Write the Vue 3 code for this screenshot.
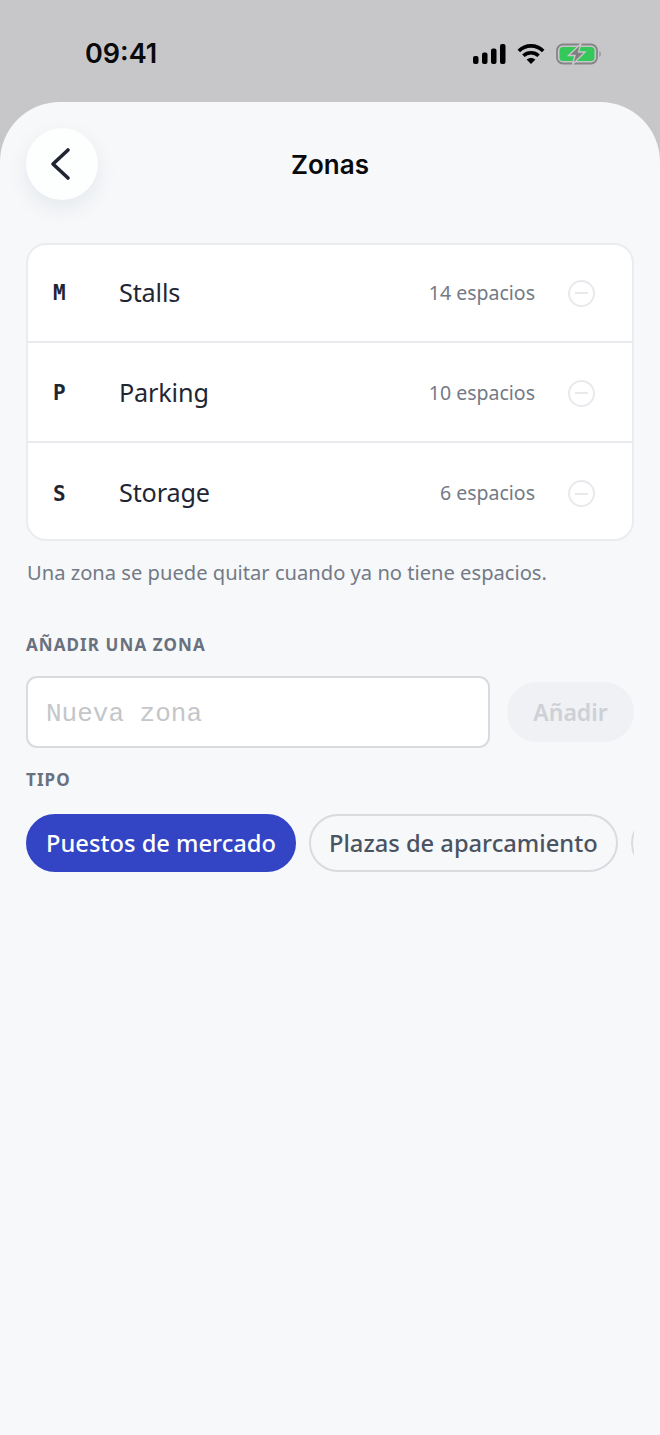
<script setup>
const zones = [
  { code: 'M', name: 'Stalls', count: '14 espacios' },
  { code: 'P', name: 'Parking', count: '10 espacios' },
  { code: 'S', name: 'Storage', count: '6 espacios' },
]
// the third chip is scrolled out of view, only its left edge shows
const types = [
  { label: 'Puestos de mercado', active: true },
  { label: 'Plazas de aparcamiento', active: false },
  { label: '', active: false },
]
</script>

<template>
  <div class="screen">
    <div class="status-bar">
      <span class="clock">09:41</span>
      <div class="status-icons">
        <svg width="33" height="20" viewBox="0 0 33 20" fill="#000">
          <rect x="0" y="12" width="5.5" height="8" rx="2" />
          <rect x="9" y="8.5" width="5.5" height="11.5" rx="2" />
          <rect x="18" y="4.5" width="5.5" height="15.5" rx="2" />
          <rect x="27" y="0" width="5.5" height="20" rx="2" />
        </svg>
        <svg class="wifi" width="28" height="22" viewBox="0 0 28 22" fill="none" stroke="#000" stroke-width="3.6">
          <path d="M1.8 8 C8.5 1.2 19.5 1.2 26.2 8" />
          <path d="M6.4 12.8 C10.6 8.8 17.4 8.8 21.6 12.8" />
          <path d="M9.6 16.6 L14 21 L18.4 16.6 C16 14.4 12 14.4 9.6 16.6Z" fill="#000" stroke="none" />
        </svg>
        <svg class="battery" width="46" height="22" viewBox="0 0 46 22" fill="none">
          <rect x="1" y="1.5" width="40" height="19" rx="6" stroke="#858587" stroke-width="1.8" />
          <rect x="3.5" y="4" width="35" height="14" rx="3.5" fill="#34c759" />
          <path d="M43.5 8 C45 8.6 45 13.4 43.5 14Z" fill="#858587" />
          <path d="M25 0.5 L12.5 12.5 L19 12.5 L16.5 21.5 L29 9 L22.5 9 Z" fill="#7f7f81" stroke="#c7c7c9" stroke-width="1.4" />
        </svg>
      </div>
    </div>

    <div class="sheet">
      <header class="header">
        <button class="back" aria-label="Volver">
          <svg width="24" height="34" viewBox="0 0 24 34" fill="none" stroke="#1f2430" stroke-width="3.6" stroke-linecap="round" stroke-linejoin="round">
            <path d="M19 3 L4 17 L19 31" />
          </svg>
        </button>
        <h1 class="title">Zonas</h1>
      </header>

      <ul class="zone-list">
        <li v-for="zone in zones" :key="zone.code" class="zone-row">
          <span class="zone-code">{{ zone.code }}</span>
          <span class="zone-name">{{ zone.name }}</span>
          <span class="zone-count">{{ zone.count }}</span>
          <span class="zone-remove"></span>
        </li>
      </ul>

      <p class="hint">Una zona se puede quitar cuando ya no tiene espacios.</p>

      <h2 class="section-label add-label">AÑADIR UNA ZONA</h2>
      <div class="add-row">
        <div class="input"><span class="placeholder">Nueva zona</span></div>
        <button class="add-btn">Añadir</button>
      </div>

      <h2 class="section-label type-label">TIPO</h2>
      <div class="chips">
        <span v-for="(type, i) in types" :key="i" class="chip" :class="{ active: type.active }">{{ type.label }}</span>
      </div>
    </div>
  </div>
</template>

<style scoped>
.screen {
  width: 660px;
  height: 1435px;
  background: #c7c7c9;
  overflow: hidden;
  font-family: "Noto Sans", "Open Sans", sans-serif;
  display: flex;
  flex-direction: column;
}

.status-bar {
  height: 102px;
  flex: none;
  display: flex;
  justify-content: space-between;
  align-items: flex-start;
  padding: 0 58px 0 85px;
  box-sizing: border-box;
}

.clock {
  margin-top: 37px;
  font-family: Inter, sans-serif;
  font-size: 27px;
  line-height: 33px;
  font-weight: 600;
  color: #0a0a0a;
}

.status-icons {
  display: flex;
  align-items: center;
  gap: 11px;
  margin-top: 43px;
}

.sheet {
  flex: 1;
  background: #f6f8fa;
  border-radius: 60px 60px 0 0;
  padding: 26px 26px 0;
}

.header {
  position: relative;
  height: 72px;
  display: flex;
  align-items: center;
  justify-content: center;
}

.back {
  position: absolute;
  left: 0;
  top: 0;
  width: 72px;
  height: 72px;
  border: 0;
  padding: 0;
  border-radius: 50%;
  background: #fdfefe;
  box-shadow: 0 8px 22px rgba(20, 30, 50, 0.07);
  display: flex;
  align-items: center;
  justify-content: center;
}

.back svg {
  margin-right: 3px;
}

.title {
  margin: 2px 0 0;
  font-family: Inter, sans-serif;
  font-size: 26px;
  line-height: 32px;
  font-weight: 600;
  color: #0a0a0a;
}

.zone-list {
  list-style: none;
  margin: 43px 0 0;
  padding: 0;
  background: #fff;
  border: 2px solid #eaecef;
  border-radius: 20px;
  width: 608px;
  box-sizing: border-box;
}

.zone-row {
  height: 100px;
  display: flex;
  align-items: center;
  padding: 2px 37px 0 25px;
  box-sizing: border-box;
  border-bottom: 2px solid #e9ebee;
}

.zone-row:first-child {
  height: 98px;
  padding-top: 0;
}

.zone-row:last-child {
  border-bottom: 0;
  height: 96px;
  padding-top: 5px;
}

.zone-code {
  width: 65px;
  flex: none;
  font-family: "DejaVu Sans Mono", monospace;
  font-size: 21px;
  font-weight: 700;
  color: #1f2633;
}

.zone-name {
  flex: 1;
  margin: -3px 0 0 1px;
  font-size: 25.2px;
  letter-spacing: -0.15px;
  line-height: 32px;
  color: #1f2633;
}

.zone-count {
  font-size: 19.5px;
  line-height: 26px;
  color: #737a86;
  margin-top: -1px;
}

.zone-remove {
  position: relative;
  width: 27px;
  height: 27px;
  margin-left: 33px;
  border: 2px solid #e8e9ec;
  border-radius: 50%;
  box-sizing: border-box;
  flex: none;
}

.zone-remove::after {
  content: "";
  position: absolute;
  left: 5px;
  right: 5px;
  top: 10.5px;
  height: 2px;
  background: #e8e9ec;
}

.hint {
  margin: 16px 0 0 1px;
  font-size: 20.15px;
  line-height: 30px;
  color: #737a86;
}

.section-label {
  margin: 0;
  font-size: 17px;
  line-height: 22px;
  font-weight: 700;
  letter-spacing: 1.1px;
  color: #69707e;
}

.add-label {
  margin-top: 47px;
}

.add-row {
  display: flex;
  align-items: center;
  margin-top: 20px;
  width: 608px;
}

.input {
  width: 464px;
  height: 72px;
  box-sizing: border-box;
  background: #fff;
  border: 2px solid #d9dbde;
  border-radius: 11px;
  padding: 0 18px;
  display: flex;
  align-items: center;
  font-family: "Liberation Mono", monospace;
  font-size: 26px;
  color: #c4c6c9;
}

.placeholder {
  margin-top: 3px;
}

.add-btn {
  margin-left: 17px;
  width: 127px;
  height: 60px;
  border: 0;
  border-radius: 30px;
  background: #eff1f4;
  font-family: inherit;
  font-size: 23px;
  font-weight: 600;
  color: #cdd0d6;
}

.type-label {
  margin-top: 21px;
}

.chips {
  display: flex;
  gap: 13px;
  margin-top: 23px;
  width: 608px;
  overflow: hidden;
}

.chip {
  flex: none;
  min-width: 60px;
  height: 58px;
  padding: 0 18px;
  box-sizing: border-box;
  display: flex;
  align-items: center;
  border: 2px solid #d9dbde;
  border-radius: 29px;
  font-size: 23.7px;
  font-weight: 500;
  color: #4a5361;
}

.chip.active {
  background: #3344c4;
  border-color: #3344c4;
  color: #fff;
}
</style>
